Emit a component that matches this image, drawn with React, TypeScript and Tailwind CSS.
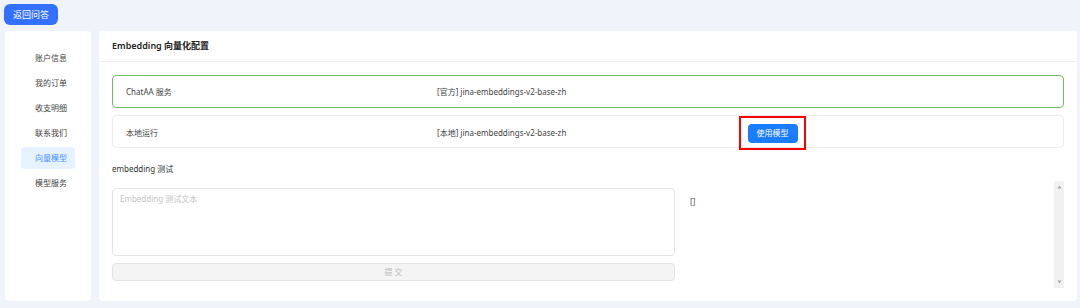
import { useState } from "react";

const menuItems = ["账户信息", "我的订单", "收支明细", "联系我们", "向量模型", "模型服务"];

const models = [
  { name: "ChatAA 服务", model: "[官方] jina-embeddings-v2-base-zh", active: true },
  { name: "本地运行", model: "[本地] jina-embeddings-v2-base-zh", active: false },
];

export default function App() {
  const [text, setText] = useState("");
  const current = "向量模型";

  return (
    <div
      className="h-[308px] w-[1080px] overflow-hidden bg-[#f0f3fa] text-[#333]"
      style={{ fontFamily: '"Segoe UI", "Noto Sans", "Noto Sans CJK SC", sans-serif' }}
    >
      <div className="px-[4px] pt-[4px]">
        <button className="flex h-[21px] w-[54px] items-center justify-center rounded-[6px] bg-[#3370ff] text-[9px] text-white">
          返回问答
        </button>
      </div>

      <div className="mt-[6px] flex gap-[8px] pl-[5px] pr-[3px]">
        <aside className="h-[270px] w-[86px] shrink-0 rounded-[4px] bg-white pt-[16px]">
          <ul className="flex flex-col gap-[3px] px-[16px]">
            {menuItems.map((item) => (
              <li
                key={item}
                className={
                  item === current
                    ? "flex h-[22px] items-center rounded-[4px] bg-[#e6f2ff] pl-[14px] text-[8px] text-[#4a90ff]"
                    : "flex h-[22px] items-center pl-[14px] text-[8px] text-[#444]"
                }
              >
                {item}
              </li>
            ))}
          </ul>
        </aside>

        <main className="h-[270px] flex-1 rounded-[4px] bg-white">
          <div className="flex h-[31px] items-center border-b border-[#f0f0f0] px-[13px] text-[9px] font-semibold text-[#222]">
            Embedding 向量化配置
          </div>

          <div className="px-[13px] pt-[13px]">
            <div className="flex flex-col gap-[7px]">
              {models.map((m) => (
                <div
                  key={m.name}
                  className={
                    m.active
                      ? "grid h-[33px] grid-cols-[311px_302px_1fr] items-center rounded-[4px] border border-[#6cbf5f] pl-[13px] text-[8px]"
                      : "grid h-[33px] grid-cols-[311px_302px_1fr] items-center rounded-[4px] border border-[#ebebeb] pl-[13px] text-[8px]"
                  }
                >
                  <span className="text-[#444]">{m.name}</span>
                  <span className="text-[#444]">{m.model}</span>
                  <span className="flex items-center">
                    {!m.active && (
                      <span className="inline-flex h-[34px] w-[67px] items-center justify-center border-2 border-[#ff0000]">
                        <button className="flex h-[19px] w-[50px] items-center justify-center rounded-[4px] bg-[#1a7cff] text-[8px] text-white">
                          使用模型
                        </button>
                      </span>
                    )}
                  </span>
                </div>
              ))}
            </div>

            <div className="mt-[15px] text-[8px] text-[#333]">embedding 测试</div>

            <div className="mt-[6px] flex items-start">
              <div className="w-[563px] shrink-0 pt-[7px]">
                <textarea
                  value={text}
                  onChange={(e) => setText(e.target.value)}
                  placeholder="Embedding 测试文本"
                  className="block h-[68px] w-full resize-none rounded-[4px] border border-[#e4e4e4] px-[7px] py-[4px] text-[8px] outline-none placeholder:text-[#c4c4c4]"
                />
                <button
                  disabled
                  className="mt-[7px] flex h-[18px] w-full items-center justify-center rounded-[4px] border border-[#e2e2e2] bg-[#f4f4f4] text-[8px] text-[#bbb]"
                >
                  提 交
                </button>
              </div>

              <div className="ml-[15px] flex h-[107px] flex-1 justify-between">
                <pre className="pt-[15px] text-[8px] text-[#555]" style={{ fontFamily: "inherit" }}>[]</pre>
                <div className="flex w-[10px] flex-col items-center justify-between bg-[#f1f1f1] py-[4px]">
                  <svg width="5" height="4" viewBox="0 0 5 4">
                    <path d="M2.5 0.5L4.5 3.5H0.5Z" fill="#a3a3a3" />
                  </svg>
                  <svg width="5" height="4" viewBox="0 0 5 4">
                    <path d="M0.5 0.5H4.5L2.5 3.5Z" fill="#a3a3a3" />
                  </svg>
                </div>
              </div>
            </div>
          </div>
        </main>
      </div>
    </div>
  );
}
